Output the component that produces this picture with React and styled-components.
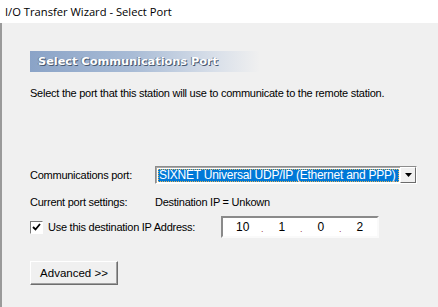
import styled, { createGlobalStyle } from "styled-components";

const GlobalStyle = createGlobalStyle`
    html, body {
        margin: 0;
        padding: 0;
        background: #f0f0f0;
    }
`

const Window = styled.div`
    width: 438px;
    height: 307px;
    overflow: hidden;
    display: flex;
    flex-direction: column;
    background: #f0f0f0;
    font-family: "Liberation Sans", Arial, sans-serif;
    font-size: 11px;
    letter-spacing: -0.25px;
    color: #000;
`

const TitleBar = styled.div`
    height: 23px;
    flex: none;
    background: #fff;
    display: flex;
    align-items: center;
    padding-left: 5px;
    font-family: "Open Sans", "Noto Sans", sans-serif;
    font-size: 11.2px;
    letter-spacing: 0;
    color: #000;
`

const Body = styled.div`
    flex: 1;
    border-left: 2px solid #9a9a9a;
    padding: 28px 0 0 28px;
`

const Banner = styled.div`
    width: 222px;
    height: 21px;
    display: flex;
    align-items: center;
    padding-left: 8px;
    background: linear-gradient(90deg, #8aa3c7 0%, #a9bcd6 45%, #d8dfe9 80%, #f0f0f0 100%);
    font-family: "DejaVu Sans", Verdana, sans-serif;
    font-weight: bold;
    font-size: 11.3px;
    letter-spacing: 0;
    color: #fff;
    text-shadow: 1px 1px 0 #4a5a70, -1px 0 0 #6d7f99;
`

const Intro = styled.p`
    margin: 15px 0 0 0;
`

const Form = styled.div`
    margin-top: 66px;
    display: grid;
    grid-template-columns: 125px auto;
    align-items: center;
`

const Label = styled.div`
    height: ${p => p.h || 19}px;
    margin-top: ${p => p.mt || 0}px;
    display: flex;
    align-items: center;
`

const Select = styled.div`
    width: 262px;
    height: 18px;
    display: flex;
    box-sizing: border-box;
    border: 1px solid;
    border-color: #8c8c8c #ffffff #ffffff #8c8c8c;
    box-shadow: inset 1px 1px 0 #a8a8a8;
    background: #fff;
`

const SelectValue = styled.div`
    flex: 1;
    margin: 2px 1px 1px 2px;
    background: #0078d7;
    color: #fff;
    display: flex;
    align-items: center;
    padding-left: 1px;
    font-size: 12px;
    outline: 1px dotted #e6b45a;
    outline-offset: -1px;
    white-space: nowrap;
    overflow: hidden;
`

const ArrowButton = styled.div`
    width: 16px;
    flex: none;
    box-sizing: border-box;
    border: 1px solid;
    border-color: #fff #6b6b6b #6b6b6b #fff;
    background: #f0f0f0;
    display: flex;
    align-items: center;
    justify-content: center;
`

const IpRow = styled.div`
    display: flex;
    align-items: center;
    margin-top: 3px;
`

const CheckRow = styled.label`
    width: 191px;
    display: flex;
    align-items: center;
    gap: 5px;
    height: 24px;
`

const Checkbox = styled.span`
    width: 13px;
    height: 13px;
    box-sizing: border-box;
    border: 1px solid;
    border-color: #7a7a7a #fff #fff #7a7a7a;
    background: #fff;
    display: flex;
    align-items: center;
    justify-content: center;
`

const IpField = styled.div`
    width: 158px;
    height: 22px;
    box-sizing: border-box;
    border: 2px solid;
    border-color: #8a8a8a #fafafa #fafafa #8a8a8a;
    background: #fff;
    display: grid;
    grid-template-columns: 10px repeat(7, 19.5px);
    align-items: center;
`

const Octet = styled.span`
    text-align: center;
    font-size: 12px;
    letter-spacing: 0;
`

const Dot = styled.span`
    text-align: center;
    color: #a0404a;
    font-size: 9px;
    padding-top: 4px;
`

const Button = styled.button`
    margin-top: 22px;
    width: 88px;
    height: 24px;
    box-sizing: border-box;
    border: 1px solid;
    border-color: #fff #6e6e6e #6e6e6e #fff;
    box-shadow: inset -1px -1px 0 #a0a0a0;
    background: #f0f0f0;
    font-family: "Liberation Sans", Arial, sans-serif;
    font-size: 11.5px;
    letter-spacing: 0;
    color: #000;
    padding: 0;
`

export default function App() {
    const octets = ["10", "1", "0", "2"]
    return (
        <>
            <GlobalStyle />
            <Window>
                <TitleBar>I/O Transfer Wizard - Select Port</TitleBar>
                <Body>
                    <Banner>Select Communications Port</Banner>
                    <Intro>Select the port that this station will use to communicate to the remote station.</Intro>
                    <Form>
                        <Label>Communications port:</Label>
                        <Select>
                            <SelectValue>SIXNET Universal UDP/IP (Ethernet and PPP)</SelectValue>
                            <ArrowButton>
                                <svg width="7" height="4" viewBox="0 0 7 4"><path d="M0 0h7L3.5 4z" fill="#000" /></svg>
                            </ArrowButton>
                        </Select>
                        <Label h={20} mt={8}>Current port settings:</Label>
                        <Label h={20} mt={8}>Destination IP = Unkown</Label>
                    </Form>
                    <IpRow>
                        <CheckRow>
                            <Checkbox>
                                <svg width="9" height="8" viewBox="0 0 9 8"><path d="M1 4l2.5 2.5L8 1" stroke="#000" strokeWidth="1.8" fill="none" /></svg>
                            </Checkbox>
                            Use this destination IP Address:
                        </CheckRow>
                        <IpField>
                            <span />
                            {octets.map((o, i) => (
                                i < 3
                                    ? [<Octet key={o + i}>{o}</Octet>, <Dot key={"d" + i}>.</Dot>]
                                    : <Octet key={o + i}>{o}</Octet>
                            ))}
                        </IpField>
                    </IpRow>
                    <Button>Advanced &gt;&gt;</Button>
                </Body>
            </Window>
        </>
    )
}
